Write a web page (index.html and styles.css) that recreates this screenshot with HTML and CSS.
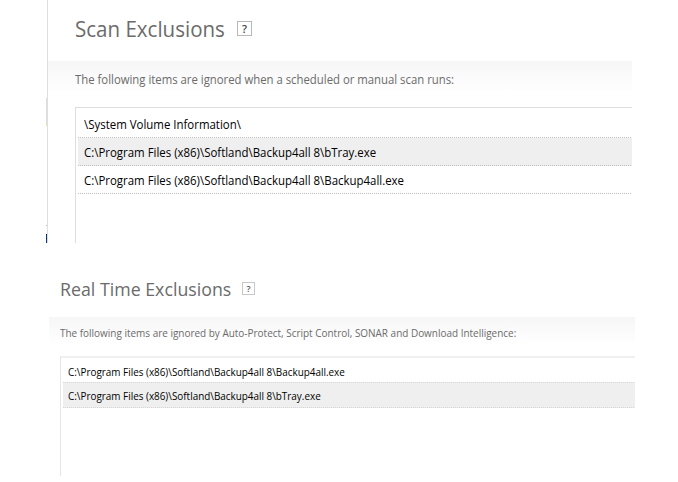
FILE: index.html
```
<!DOCTYPE html>
<html lang="en">
<head>
<meta charset="utf-8">
<title>Exclusions</title>
<link rel="stylesheet" href="styles.css">
</head>
<body>
<section class="panel scan">
  <div class="edge"><i class="mark-gray"></i><i class="mark-yellow"></i><i class="mark-dot"></i><i class="mark-blue"></i></div>
  <header class="head"><h1><span>Scan Exclusions</span></h1><span class="help">?</span></header>
  <p class="desc"><span>The following items are ignored when a scheduled or manual scan runs:</span></p>
  <ul class="list">
    <li><span>\System Volume Information\</span></li>
    <li class="alt"><span>C:\Program Files (x86)\Softland\Backup4all 8\bTray.exe</span></li>
    <li><span>C:\Program Files (x86)\Softland\Backup4all 8\Backup4all.exe</span></li>
  </ul>
</section>
<section class="panel realtime">
  <header class="head"><h1><span>Real Time Exclusions</span></h1><span class="help">?</span></header>
  <p class="desc"><span>The following items are ignored by Auto-Protect, Script Control, SONAR and Download Intelligence:</span></p>
  <ul class="list">
    <li><span>C:\Program Files (x86)\Softland\Backup4all 8\Backup4all.exe</span></li>
    <li class="alt"><span>C:\Program Files (x86)\Softland\Backup4all 8\bTray.exe</span></li>
  </ul>
</section>
</body>
</html>
```
FILE: styles.css
```
* { box-sizing: border-box; }
body { margin: 0; width: 678px; height: 482px; overflow: hidden; background: #fff; font-family: "Open Sans", "Noto Sans", sans-serif; color: #000; }
h1, p, ul { margin: 0; padding: 0; font-weight: 400; }
li { list-style: none; }
li, .desc, h1 { white-space: nowrap; }
h1 span, .desc span, li span { display: inline-block; transform-origin: 0 50%; }
.head { display: flex; color: #6b6b6b; }
.help { display: flex; align-items: center; justify-content: center; border: 1px solid #b8b8b8; color: #444; font-weight: 600; }
.desc { color: #6b6b6b; background: linear-gradient(#f6f6f6, #fff); }

.scan { position: relative; width: 585px; height: 243px; margin-left: 47px; border-left: 1px solid #dedede; }
.scan .head { height: 61px; padding: 13px 0 0 27px; }
.scan h1 { width: 162px; font-size: 22px; line-height: 30px; }
.scan h1 span { transform: scaleX(.933); }
.scan .help { width: 15px; height: 15px; margin-top: 8px; font-size: 11px; line-height: 13px; }
.scan .desc { height: 32px; padding-left: 27px; font-size: 12px; line-height: 38px; }
.scan .desc span { transform: scaleX(.945); }
.scan .list { height: 136px; margin: 14px 0 0 27px; padding: 2px 0 0 2px; border: solid #dedede; border-width: 1px 0 0 1px; }
.scan li { height: 28px; padding-left: 6px; font-size: 12px; line-height: 30px; background: repeating-linear-gradient(90deg, #bebebe 0 1px, transparent 1px 2px) left bottom / 100% 1px no-repeat; }
.scan li span { transform: scaleX(.953); }
.scan li.alt { background-color: #efefef; }
.edge i { position: absolute; left: -2px; width: 1px; }
.mark-gray { top: 98px; height: 26px; background: #dedede; }
.mark-yellow { top: 124px; height: 2px; background: #ffe58a; }
.mark-dot { top: 225px; height: 1px; background: #bbb; }
.mark-blue { top: 234px; height: 9px; background: linear-gradient(#001840 0 1px, #003c96 1px 4px, #001840 4px 5px, #003c96 5px); }

.realtime { width: 586px; margin: 30px 0 0 49px; }
.realtime .head { height: 44px; padding: 3px 0 0 11px; }
.realtime h1 { width: 182px; font-size: 19px; line-height: 26px; }
.realtime h1 span { transform: scaleX(.935); }
.realtime .help { width: 13px; height: 13px; margin-top: 6px; font-size: 9px; line-height: 11px; border-color: #c8c8c8; color: #555; }
.realtime .desc { height: 27px; padding-left: 11px; font-size: 10.5px; line-height: 32px; }
.realtime .desc span { transform: scaleX(.948); }
.realtime .list { height: 120px; margin: 12px 0 0 11px; padding: 1px 0 0 2px; border: solid #e6e6e6; border-width: 1px 0 0 1px; border-top-color: #f0f0f0; box-shadow: inset 0 1px #f0f0f0; }
.realtime li { height: 25px; padding-left: 5px; font-size: 10.5px; line-height: 28px; background: repeating-linear-gradient(90deg, #d6d6d6 0 1px, #ececec 1px 2px) left bottom / 100% 1px no-repeat; }
.realtime li span { transform: scaleX(.942); }
.realtime li.alt { line-height: 27px; background-color: #efefef; }
```
